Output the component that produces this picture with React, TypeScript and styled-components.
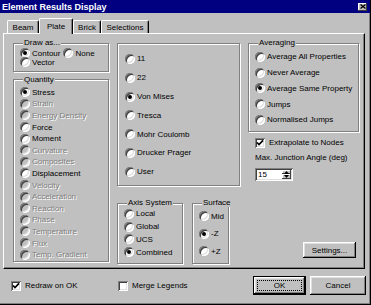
import React from 'react';
import styled, { createGlobalStyle } from 'styled-components';

const GlobalStyle = createGlobalStyle`
  html, body {
    margin: 0;
    padding: 0;
    background: #c0c0c0;
  }
  body {
    font-family: "Liberation Sans", Arial, sans-serif;
    font-size: 8px;
    color: #000;
  }
`;

const quantities = [
    { label: 'Stress', checked: true },
    { label: 'Strain', disabled: true },
    { label: 'Energy Density', disabled: true },
    { label: 'Force' },
    { label: 'Moment' },
    { label: 'Curvature', disabled: true },
    { label: 'Composites', disabled: true },
    { label: 'Displacement' },
    { label: 'Velocity', disabled: true },
    { label: 'Acceleration', disabled: true },
    { label: 'Reaction', disabled: true },
    { label: 'Phase', disabled: true },
    { label: 'Temperature', disabled: true },
    { label: 'Flux', disabled: true },
    { label: 'Temp. Gradient', disabled: true },
];

const components = ['11', '22', 'Von Mises', 'Tresca', 'Mohr Coulomb', 'Drucker Prager', 'User'];
const axes = ['Local', 'Global', 'UCS', 'Combined'];
const surfaces = ['Mid', '-Z', '+Z'];
const averaging = [
    'Average All Properties',
    'Never Average',
    'Average Same Property',
    'Jumps',
    'Normalised Jumps',
];

const tabs = [
    { label: 'Beam', width: 32 },
    { label: 'Plate', width: 34, active: true },
    { label: 'Brick', width: 28 },
    { label: 'Selections', width: 48 },
];

const Radio = ({ label, checked, disabled, h }: { label: string; checked?: boolean; disabled?: boolean; h: number }) => (
    <Option $h={h} $disabled={disabled}>
        <RadioDot $checked={checked} $disabled={disabled} />
        <span>{label}</span>
    </Option>
);

const Check = ({ label, checked }: { label: string; checked?: boolean }) => (
    <CheckRow>
        <CheckBox>
            {checked && (
                <svg width="8" height="8" viewBox="0 0 8 8">
                    <path d="M1 3.5 L3 5.6 L7 1.4" stroke="#000" strokeWidth="1.7" fill="none" />
                </svg>
            )}
        </CheckBox>
        <span>{label}</span>
    </CheckRow>
);

const App = () => {
    return (
        <>
            <GlobalStyle />
            <Window>
                <TitleBar>
                    <span>Element Results Display</span>
                    <CloseButton>
                        <svg width="6" height="5" viewBox="0 0 6 5">
                            <path d="M0.5 0.5 L5.5 4.5 M5.5 0.5 L0.5 4.5" stroke="#000" strokeWidth="1.3" />
                        </svg>
                    </CloseButton>
                </TitleBar>

                <TabStrip>
                    {tabs.map((t) => (
                        <Tab key={t.label} $active={t.active} $w={t.width}>
                            {t.label}
                        </Tab>
                    ))}
                </TabStrip>

                <Panel>
                    <Column>
                        <Group $pt={1.5} $pb={4}>
                            <legend>Draw as...</legend>
                            <DrawGrid>
                                <Radio label="Contour" checked h={9} />
                                <Radio label="None" h={9} />
                                <Radio label="Vector" h={9} />
                            </DrawGrid>
                        </Group>
                        <Group $pt={3} $pb={1}>
                            <legend>Quantity</legend>
                            {quantities.map((q) => (
                                <Radio key={q.label} label={q.label} checked={q.checked} disabled={q.disabled} h={11.6} />
                            ))}
                        </Group>
                    </Column>

                    <Column>
                        <PlainGroup>
                            {components.map((c) => (
                                <Radio key={c} label={c} checked={c === 'Von Mises'} h={18.8} />
                            ))}
                        </PlainGroup>
                        <BoxRow>
                            <Group $pt={0.6} $pb={4.5} $w={66}>
                                <legend>Axis System</legend>
                                {axes.map((a) => (
                                    <Radio key={a} label={a} checked={a === 'Combined'} h={12.7} />
                                ))}
                            </Group>
                            <Group $pt={0.3} $pb={3} $w={37}>
                                <legend>Surface</legend>
                                {surfaces.map((s) => (
                                    <Radio key={s} label={s} checked={s === '-Z'} h={17.5} />
                                ))}
                            </Group>
                        </BoxRow>
                    </Column>

                    <Column>
                        <Group $pt={2} $pb={3}>
                            <legend>Averaging</legend>
                            {averaging.map((a) => (
                                <Radio key={a} label={a} checked={a === 'Average Same Property'} h={15.75} />
                            ))}
                        </Group>
                        <Indented>
                            <Check label="Extrapolate to Nodes" checked />
                            <AngleLabel>Max. Junction Angle (deg)</AngleLabel>
                            <Spin>
                                <SpinInput>15</SpinInput>
                                <SpinButtons>
                                    <SpinButton>
                                        <svg width="5" height="3" viewBox="0 0 5 3">
                                            <path d="M2.5 0 L5 3 L0 3 Z" fill="#000" />
                                        </svg>
                                    </SpinButton>
                                    <SpinButton>
                                        <svg width="5" height="3" viewBox="0 0 5 3">
                                            <path d="M0 0 L5 0 L2.5 3 Z" fill="#000" />
                                        </svg>
                                    </SpinButton>
                                </SpinButtons>
                            </Spin>
                        </Indented>
                        <SettingsButton>Settings...</SettingsButton>
                    </Column>
                </Panel>

                <Footer>
                    <FooterCheck>
                        <Check label="Redraw on OK" checked />
                    </FooterCheck>
                    <Check label="Merge Legends" />
                    <Buttons>
                        <DefaultButton>
                            <FocusRing>OK</FocusRing>
                        </DefaultButton>
                        <Button $w={56}>Cancel</Button>
                    </Buttons>
                </Footer>
            </Window>
        </>
    );
};

const Window = styled.div`
    width: 371px;
    height: 305px;
    box-sizing: border-box;
    background: #c0c0c0;
    border-right: 1px solid #000;
    border-bottom: 1px solid #000;
    box-shadow: inset -1px -1px 0 #808080;
    display: flex;
    flex-direction: column;
    overflow: hidden;
`;

const TitleBar = styled.div`
    height: 13px;
    flex: none;
    background: #000080;
    color: #fff;
    font-weight: bold;
    font-size: 9px;
    display: flex;
    align-items: center;
    justify-content: space-between;
    padding: 0 3px 0 2px;
`;

const CloseButton = styled.span`
    width: 9px;
    height: 8px;
    background: #c0c0c0;
    box-shadow: inset -1px -1px #404040, inset 1px 1px #fff;
    display: flex;
    align-items: center;
    justify-content: center;
`;

const TabStrip = styled.div`
    height: 15px;
    margin-top: 5px;
    padding-left: 7px;
    display: flex;
    align-items: flex-end;
    position: relative;
    z-index: 1;
`;

const Tab = styled.div<{ $active?: boolean; $w: number }>`
    width: ${(p) => p.$w}px;
    height: ${(p) => (p.$active ? 16 : 13)}px;
    margin-bottom: ${(p) => (p.$active ? -1 : 0)}px;
    box-sizing: border-box;
    background: #c0c0c0;
    border-top: 1px solid #fff;
    border-left: 1px solid #fff;
    border-right: 1px solid #000;
    border-radius: 2px 2px 0 0;
    box-shadow: inset -1px 0 #808080;
    display: flex;
    justify-content: center;
    padding-top: ${(p) => (p.$active ? 3 : 2)}px;
    line-height: 9px;
`;

const Panel = styled.div`
    width: 362px;
    height: 236px;
    margin-left: 3px;
    box-sizing: border-box;
    border-top: 1px solid #fff;
    border-left: 1px solid #fff;
    border-right: 1px solid #000;
    border-bottom: 1px solid #000;
    box-shadow: inset -1px -1px #808080;
    padding: 5px 0 0 9px;
    display: grid;
    grid-template-columns: 96px 123px 111px;
    column-gap: 8px;
`;

const Column = styled.div`
    display: flex;
    flex-direction: column;
    gap: 4px;
`;

const Group = styled.fieldset<{ $pt: number; $pb: number; $w?: number }>`
    margin: 0;
    min-width: 0;
    width: ${(p) => (p.$w ? `${p.$w}px` : 'auto')};
    box-sizing: border-box;
    border: 1px solid #808080;
    box-shadow: inset 1px 1px #fff, 1px 1px #fff;
    padding: ${(p) => p.$pt}px 2px ${(p) => p.$pb}px 6px;

    legend {
        font-size: 8px;
        line-height: 8px;
        padding: 0 1px;
        margin-left: 3px;
        background: #c0c0c0;
    }
`;

const PlainGroup = styled.div`
    margin-top: 4px;
    height: 143px;
    box-sizing: border-box;
    border: 1px solid #808080;
    box-shadow: inset 1px 1px #fff, 1px 1px #fff;
    padding: 5.6px 2px 0 7px;
`;

const BoxRow = styled.div`
    margin-top: 9px;
    display: flex;
    gap: 9px;
`;

const DrawGrid = styled.div`
    display: grid;
    grid-template-columns: max-content max-content;
    column-gap: 3px;
`;

const Option = styled.div<{ $h: number; $disabled?: boolean }>`
    display: flex;
    align-items: center;
    gap: 2px;
    height: ${(p) => p.$h}px;
    white-space: nowrap;
    color: ${(p) => (p.$disabled ? '#808080' : '#000')};
    text-shadow: ${(p) => (p.$disabled ? '1px 1px 0 #fff' : 'none')};
`;

const RadioDot = styled.span<{ $checked?: boolean; $disabled?: boolean }>`
    width: 10px;
    height: 10px;
    flex: none;
    border-radius: 50%;
    background: ${(p) => (p.$disabled ? '#c0c0c0' : '#fff')};
    box-shadow: inset 1px 1px #808080, inset -1px -1px #fff, inset 2px 2px #404040, inset -2px -2px #dfdfdf;
    display: flex;
    align-items: center;
    justify-content: center;

    &::after {
        content: '';
        width: 4px;
        height: 4px;
        border-radius: 50%;
        background: ${(p) => (p.$checked ? '#000' : 'transparent')};
    }
`;

const CheckRow = styled.div`
    display: flex;
    align-items: center;
    gap: 4px;
    height: 12px;
    white-space: nowrap;
`;

const CheckBox = styled.span`
    width: 10px;
    height: 10px;
    flex: none;
    background: #fff;
    box-shadow: inset 1px 1px #808080, inset -1px -1px #fff, inset 2px 2px #404040, inset -2px -2px #dfdfdf;
    display: flex;
    align-items: center;
    justify-content: center;
`;

const Indented = styled.div`
    padding-left: 7px;
    margin-top: 1px;
    display: flex;
    flex-direction: column;
`;

const AngleLabel = styled.div`
    margin-top: 4px;
    height: 10px;
    line-height: 10px;
`;

const Spin = styled.div`
    margin-top: 5px;
    width: 38px;
    height: 13px;
    box-sizing: border-box;
    background: #fff;
    box-shadow: inset 1px 1px #808080, inset -1px -1px #fff, inset 2px 2px #404040, inset -2px -2px #dfdfdf;
    display: flex;
    padding: 2px;
`;

const SpinInput = styled.span`
    flex: 1;
    line-height: 9px;
    padding-left: 1px;
`;

const SpinButtons = styled.div`
    width: 9px;
    display: flex;
    flex-direction: column;
`;

const SpinButton = styled.span`
    flex: 1;
    background: #c0c0c0;
    box-shadow: inset -1px -1px #404040, inset 1px 1px #fff;
    display: flex;
    align-items: center;
    justify-content: center;
`;

const Button = styled.div<{ $w: number }>`
    width: ${(p) => p.$w}px;
    height: 19px;
    box-sizing: border-box;
    background: #c0c0c0;
    box-shadow: inset -1px -1px #000, inset 1px 1px #fff, inset -2px -2px #808080, inset 2px 2px #dfdfdf;
    display: flex;
    align-items: center;
    justify-content: center;
`;

const SettingsButton = styled(Button).attrs({ $w: 53 })`
    height: 16px;
    margin-top: auto;
    margin-bottom: 10px;
    align-self: flex-end;
    margin-right: 3px;
`;

const DefaultButton = styled.div`
    width: 53px;
    height: 19px;
    box-sizing: border-box;
    border: 1px solid #000;
    background: #c0c0c0;
    box-shadow: inset -1px -1px #000, inset 1px 1px #fff, inset -2px -2px #808080, inset 2px 2px #dfdfdf;
    padding: 3px;
    display: flex;
`;

const FocusRing = styled.div`
    flex: 1;
    border: 1px dotted #000;
    display: flex;
    align-items: center;
    justify-content: center;
`;

const Footer = styled.div`
    flex: 1;
    display: flex;
    align-items: center;
    padding: 0 4px 2px 11px;
`;

const FooterCheck = styled.div`
    width: 107px;
`;

const Buttons = styled.div`
    margin-left: auto;
    display: flex;
    gap: 4px;
`;

export default App;
